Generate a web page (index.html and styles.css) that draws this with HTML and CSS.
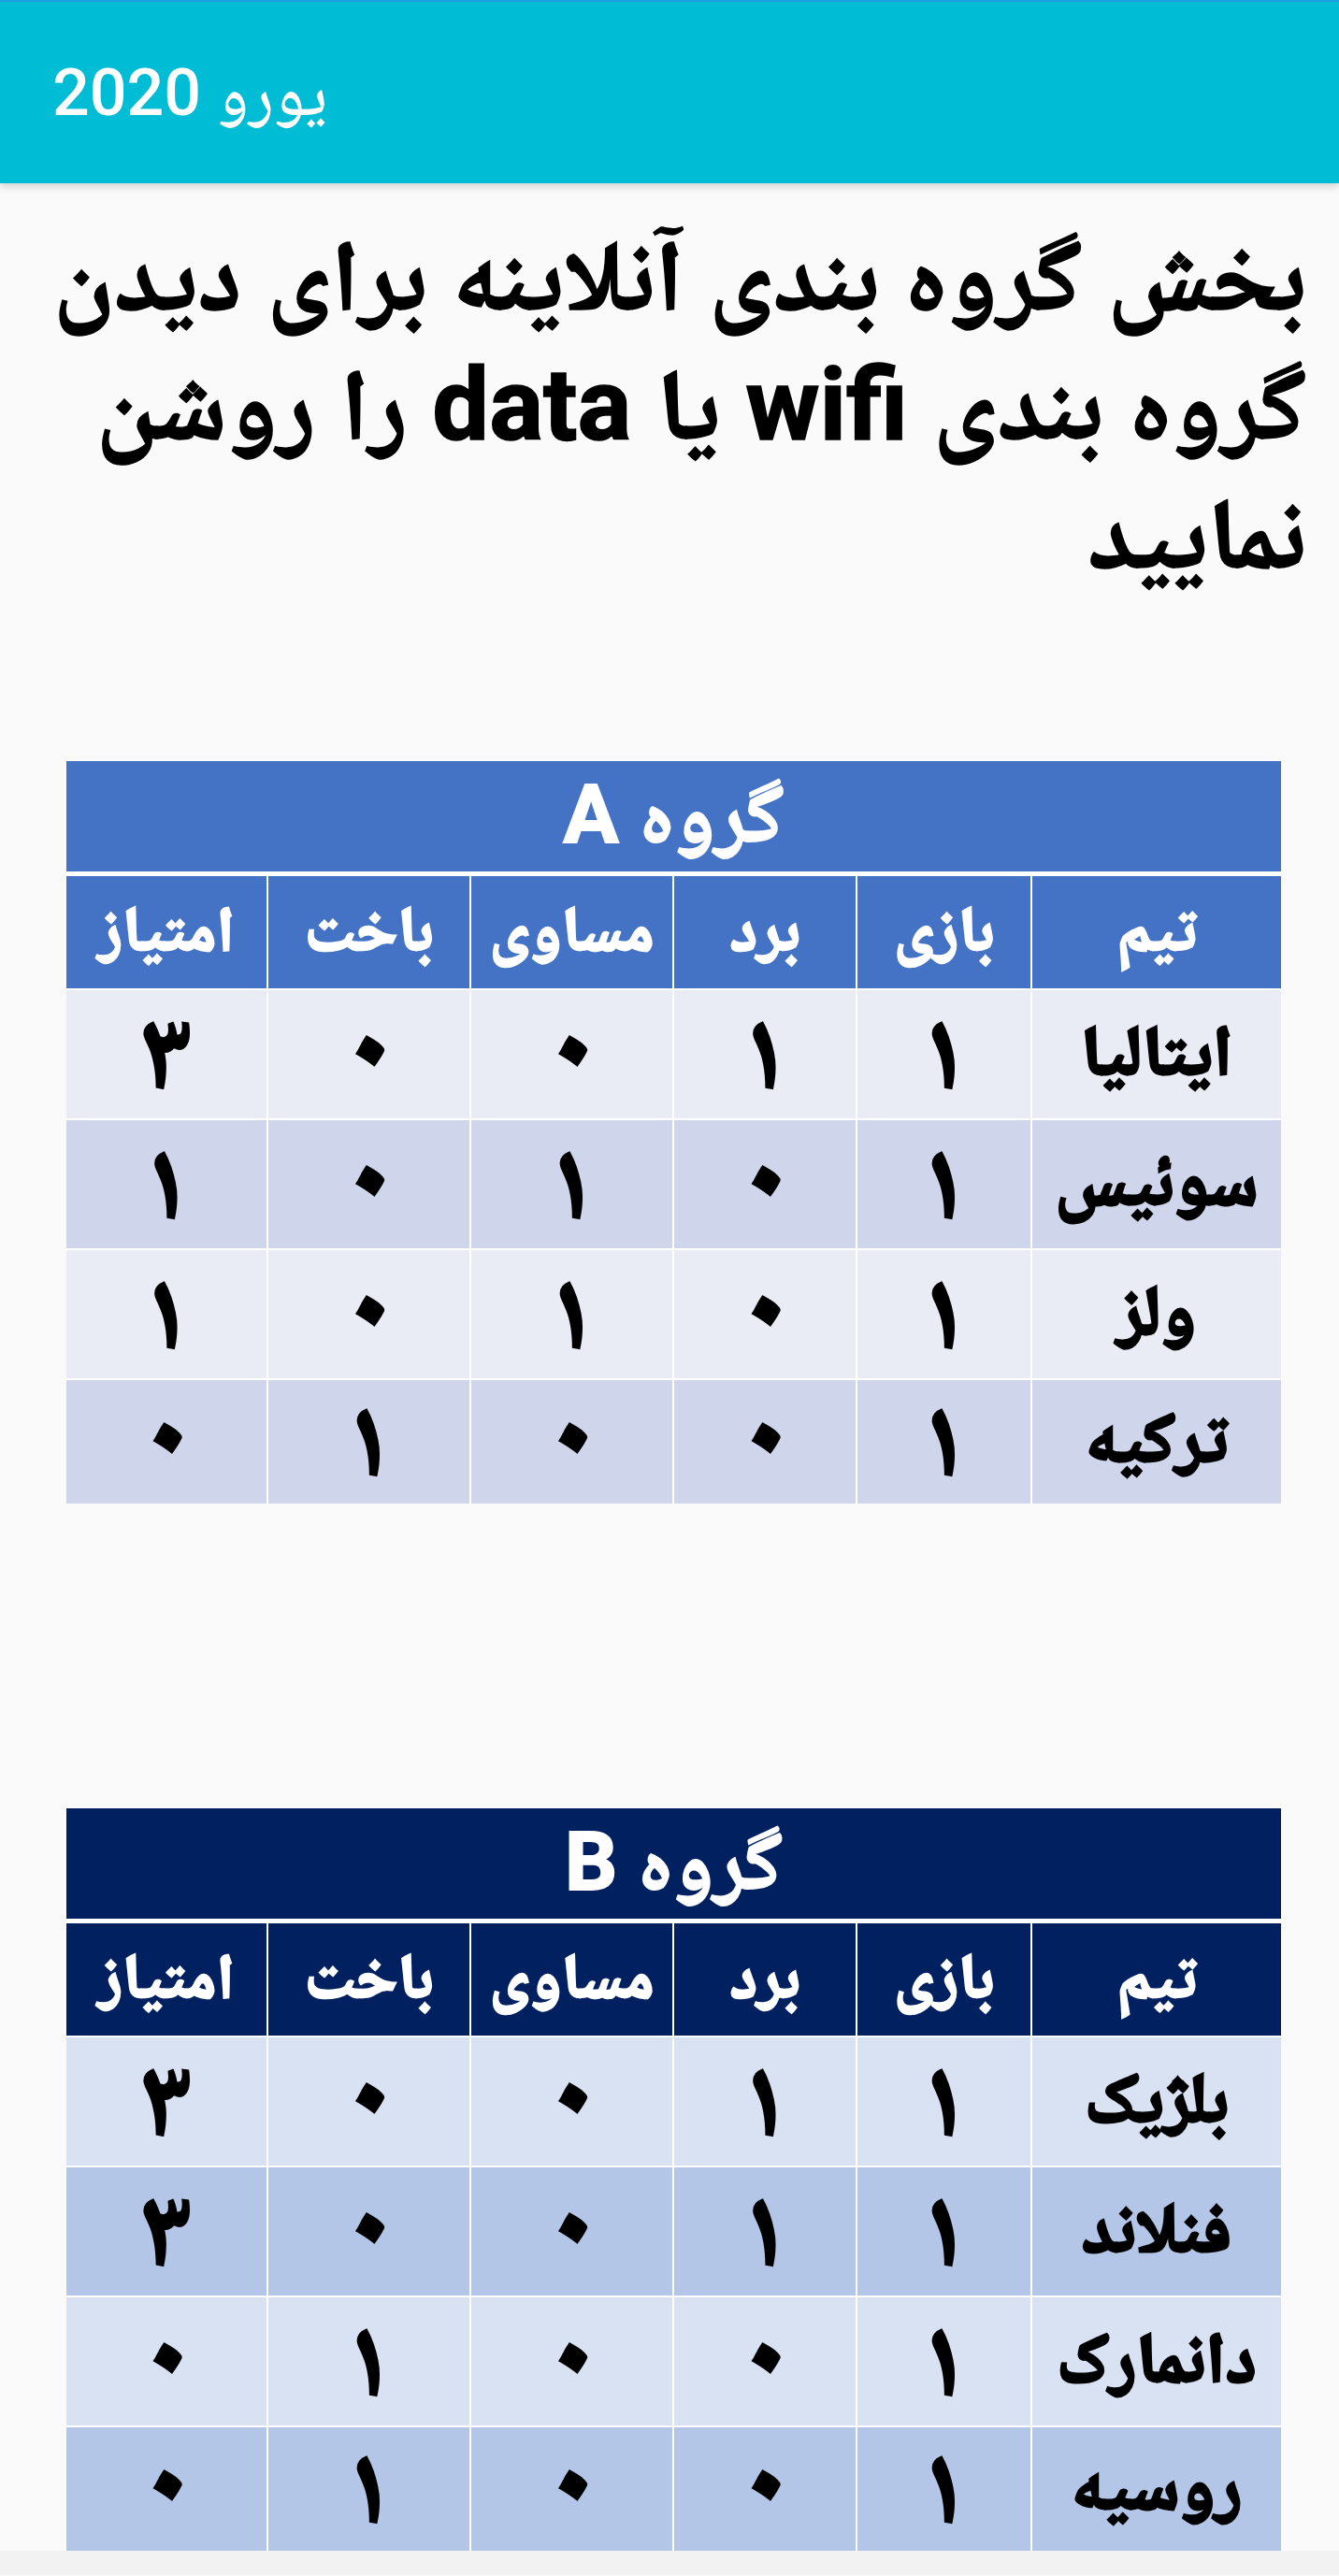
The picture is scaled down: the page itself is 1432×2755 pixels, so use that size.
FILE: index.html
```html
<!DOCTYPE html>
<html lang="fa">
<head>
<meta charset="utf-8">
<title>یورو 2020</title>
<link rel="stylesheet" href="styles.css">
</head>
<body>
<header class="toolbar">
  <span class="toolbar-title" dir="rtl">یورو 2020</span>
</header>
<main class="content" dir="rtl">
  <h1 class="heading"><span class="line">بخش گروه بندی آنلاینه برای دیدن</span><span class="line">گروه بندی wifi یا data را روشن</span><span class="line">نمایید</span></h1>

  <section class="group group-a">
    <div class="g-title">گروه A</div>
    <div class="cell head">تیم</div><div class="cell head">بازی</div><div class="cell head">برد</div><div class="cell head">مساوی</div><div class="cell head">باخت</div><div class="cell head">امتیاز</div>
    <div class="cell odd name">ایتالیا</div><div class="cell odd num">۱</div><div class="cell odd num">۱</div><div class="cell odd num zero">۰</div><div class="cell odd num zero">۰</div><div class="cell odd num">۳</div>
    <div class="cell even name">سوئیس</div><div class="cell even num">۱</div><div class="cell even num zero">۰</div><div class="cell even num">۱</div><div class="cell even num zero">۰</div><div class="cell even num">۱</div>
    <div class="cell odd name">ولز</div><div class="cell odd num">۱</div><div class="cell odd num zero">۰</div><div class="cell odd num">۱</div><div class="cell odd num zero">۰</div><div class="cell odd num">۱</div>
    <div class="cell even name">ترکیه</div><div class="cell even num">۱</div><div class="cell even num zero">۰</div><div class="cell even num zero">۰</div><div class="cell even num">۱</div><div class="cell even num zero">۰</div>
  </section>

  <section class="group group-b">
    <div class="g-title">گروه B</div>
    <div class="cell head">تیم</div><div class="cell head">بازی</div><div class="cell head">برد</div><div class="cell head">مساوی</div><div class="cell head">باخت</div><div class="cell head">امتیاز</div>
    <div class="cell odd name">بلژیک</div><div class="cell odd num">۱</div><div class="cell odd num">۱</div><div class="cell odd num zero">۰</div><div class="cell odd num zero">۰</div><div class="cell odd num">۳</div>
    <div class="cell even name">فنلاند</div><div class="cell even num">۱</div><div class="cell even num">۱</div><div class="cell even num zero">۰</div><div class="cell even num zero">۰</div><div class="cell even num">۳</div>
    <div class="cell odd name">دانمارک</div><div class="cell odd num">۱</div><div class="cell odd num zero">۰</div><div class="cell odd num zero">۰</div><div class="cell odd num">۱</div><div class="cell odd num zero">۰</div>
    <div class="cell even name">روسیه</div><div class="cell even num">۱</div><div class="cell even num zero">۰</div><div class="cell even num zero">۰</div><div class="cell even num">۱</div><div class="cell even num zero">۰</div>
  </section>
</main>
<div class="nav-strip"></div>
</body>
</html>
```

FILE: styles.css
```css
html, body {
  margin: 0;
  padding: 0;
}
body {
  background: #fafafa;
  font-family: Roboto, "Noto Naskh Arabic", "Noto Sans Arabic", "DejaVu Sans", sans-serif;
  color: #000;
}
.toolbar {
  position: relative;
  z-index: 2;
  box-sizing: border-box;
  height: 196px;
  background: #00bcd4;
  border-top: 2px solid #1e9be6;
  display: flex;
  align-items: center;
  padding-left: 56px;
  box-shadow: 0 3px 9px rgba(0, 0, 0, 0.18);
}
.toolbar-title {
  color: #fff;
  font-size: 70px;
  font-weight: 500;
  line-height: 1;
}
.heading {
  margin: 0;
  padding: 30px 35px 0 30px;
  font-size: 108px;
  font-weight: 700;
  line-height: 138px;
  text-align: right;
  -webkit-text-stroke: 1.5px #000;
}
.line {
  display: block;
  white-space: nowrap;
}
.group {
  display: grid;
  grid-template-columns: 266px 185px 194px 215px 215px 214px;
  grid-template-rows: 121px 120px 137px 137px 137px 132px;
  gap: 2px;
  background: #fff;
  margin: 0 62px 0 71px;
  font-weight: 700;
}
.group-a {
  margin-top: 174px;
}
.group-b {
  margin-top: 326px;
}
.g-title {
  grid-column: 1 / -1;
  box-sizing: border-box;
  border-bottom: 3px solid #fff;
  display: flex;
  align-items: center;
  justify-content: center;
  color: #fff;
  font-size: 88px;
  line-height: 100px;
  padding-bottom: 4px;
  -webkit-text-stroke: 2px #fff;
}
.cell {
  display: flex;
  align-items: center;
  justify-content: center;
  font-size: 68px;
  line-height: 100px;
  white-space: nowrap;
}
.name {
  font-size: 76px;
  padding-bottom: 8px;
  -webkit-text-stroke: 3px #000;
}
.num {
  font-size: 118px;
  line-height: 100px;
  padding-bottom: 8px;
  -webkit-text-stroke: 2px #000;
}
.zero {
  font-size: 140px;
  padding-bottom: 40px;
}
.head {
  color: #fff;
  padding-bottom: 6px;
  -webkit-text-stroke: 2.5px #fff;
}
.group-a .g-title,
.group-a .head {
  background: #4472c4;
}
.group-a .odd {
  background: #e9ebf5;
}
.group-a .even {
  background: #cfd5ea;
}
.group-b .g-title,
.group-b .head {
  background: #002060;
}
.group-b .odd {
  background: #d9e2f3;
}
.group-b .even {
  background: #b4c6e7;
}
.nav-strip {
  height: 26px;
  background: #f2f2f2;
}
```
